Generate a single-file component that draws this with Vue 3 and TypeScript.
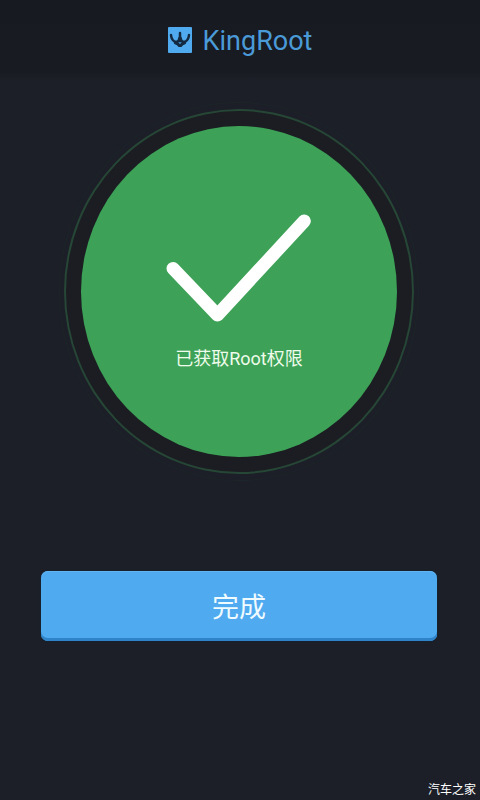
<script setup lang="ts">
import { ref } from 'vue'

const appName = 'KingRoot'
const status = ref('已获取Root权限')
const finished = ref(false)

function finish(): void {
  finished.value = true
}
</script>

<template>
  <div class="screen">
    <header class="bar">
      <svg class="logo" viewBox="0 0 24 26" aria-hidden="true">
        <rect width="24" height="26" rx="1" fill="#50aaf0" />
        <g fill="none" stroke="#142a40" stroke-linecap="round" stroke-linejoin="round">
          <path d="M3 8 Q3.500 14 8 15 Q11 15 11.500 11 M21 8 Q20.500 14 16 15 Q13 15 12.500 11" stroke-width="2.500" />
          <path d="M12 6 V14" stroke-width="2.500" />
          <path d="M7.500 16 Q12 18.500 16.500 16" stroke-width="3" />
        </g>
        <path d="M8 17 H16 L13.500 20 H10.500 Z" fill="#142a40" />
        <circle cx="12" cy="16" r="1" fill="#3c83bd" />
      </svg>
      <h1 class="name">{{ appName }}</h1>
    </header>

    <main class="content">
      <div class="halo">
        <div class="ring">
          <section class="disc" role="status">
            <svg class="check" viewBox="0 0 144 108" aria-hidden="true">
              <path
                d="M7 54 L51 100 L137 7"
                fill="none"
                stroke="#fff"
                stroke-width="13"
                stroke-linecap="round"
                stroke-linejoin="round"
              />
            </svg>
            <p class="status">{{ status }}</p>
          </section>
        </div>
      </div>
      <button class="done" type="button" :aria-pressed="finished" @click="finish">完成</button>
    </main>

    <footer class="credit">汽车之家</footer>
  </div>
</template>

<style>
body {
  margin: 0;
  background: #1c1f27;
}
</style>

<style scoped>
.screen {
  display: flex;
  flex-direction: column;
  box-sizing: border-box;
  min-height: 100vh;
  background: #1c1f27;
  font-family: Roboto, "Noto Sans CJK SC", sans-serif;
}

.bar {
  display: flex;
  align-items: center;
  justify-content: center;
  gap: 11px;
  height: 80px;
  background: linear-gradient(#171a20, #181b21 90%, #1c1f27);
}

.logo {
  width: 24px;
  height: 26px;
}

.name {
  margin: 0;
  padding-top: 2px;
  color: #4b9ad8;
  font-size: 27px;
  font-weight: 400;
  line-height: 32px;
}

.content {
  display: flex;
  flex: 1;
  flex-direction: column;
  align-items: center;
  gap: 90px;
  padding: 22px 43px 0 41px;
}

.halo {
  display: flex;
  box-sizing: border-box;
  width: 100%;
  max-width: 360px;
  aspect-ratio: 360 / 379;
  padding: 6px 4px;
  border: 1px solid #1c2529;
  border-radius: 50%;
}

.ring {
  display: flex;
  flex: 1;
  padding: 15px;
  border: 2px solid #264636;
  border-radius: 50%;
  background: #1b1d22;
}

.disc {
  display: flex;
  flex: 1;
  flex-direction: column;
  align-items: center;
  justify-content: center;
  gap: 24px;
  box-sizing: border-box;
  padding-top: 2px;
  border-radius: 50%;
  background: #3da257;
}

.check {
  width: 46%;
}

.status {
  margin: 0;
  color: #eefbea;
  font-size: 18px;
  line-height: 24px;
}

.done {
  width: 100%;
  height: 70px;
  padding: 0 0 2px;
  border: 0;
  border-radius: 7px;
  background: #4faaf0;
  box-shadow: inset 0 -3px 0 #2f84c9, inset 0 1px 0 #61b5f3, 0 0 2px #0e2840;
  color: #f0fbff;
  font: inherit;
  font-size: 27px;
  cursor: pointer;
}

.done:active {
  background: #409ce3;
}

.credit {
  padding: 0 4px 3px;
  color: #fff;
  font-family: "Noto Sans CJK SC", sans-serif;
  font-size: 12px;
  line-height: 16px;
  text-align: right;
}
</style>
